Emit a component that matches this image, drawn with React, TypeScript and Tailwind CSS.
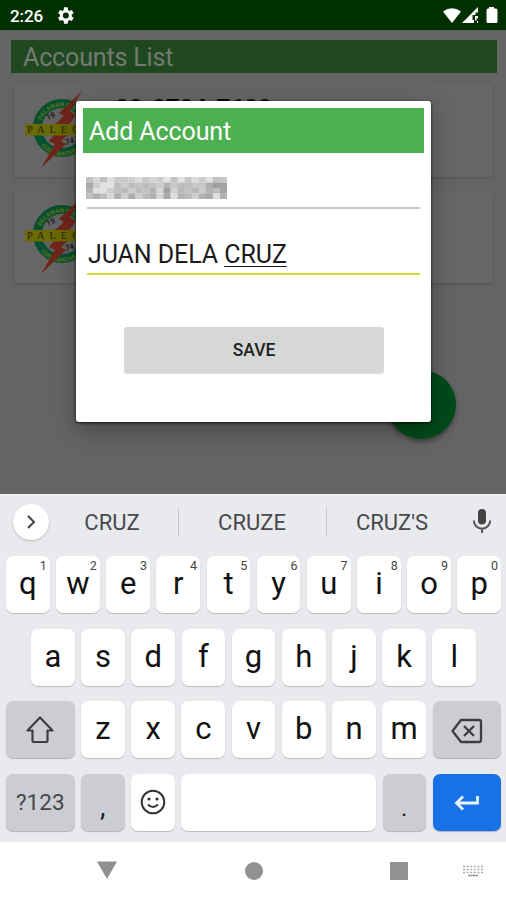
import React from "react";

const MOSAIC: number[][] = [
  [195, 215, 190, 222, 200, 200, 205, 222, 200, 212, 205, 228, 195, 225, 200, 222, 205, 225, 195, 200],
  [170, 205, 225, 225, 190, 205, 190, 195, 188, 195, 205, 180, 200, 190, 190, 200, 200, 175, 160, 165],
  [180, 225, 225, 205, 190, 185, 205, 188, 195, 180, 215, 160, 210, 185, 195, 185, 205, 180, 190, 165],
  [190, 175, 190, 215, 178, 205, 172, 205, 185, 175, 215, 168, 222, 178, 185, 208, 178, 170, 222, 178],
];

function NumberMosaic() {
  return (
    <svg className="block h-[22px] w-[141px]" viewBox="0 0 140 22" preserveAspectRatio="none">
      {MOSAIC.map((row, y) =>
        row.map((v, x) => (
          <rect key={`${x}-${y}`} x={x * 7} y={y * 5.5} width={7.2} height={5.7} fill={`rgb(${v},${v},${v})`} />
        ))
      )}
    </svg>
  );
}

function Seal({ id }: { id: string }) {
  return (
    <svg className="block h-[84px] w-[78px] shrink-0" viewBox="0 0 78 84">
      <defs>
        <path id={`${id}t`} d="M17.500 43 a22.500 22.500 0 0 1 45 0" />
        <path id={`${id}b`} d="M13 43 a27 27 0 0 0 54 0" />
      </defs>
      <circle cx="40" cy="42" r="24.500" fill="#646464" stroke="#08502f" strokeWidth="9" />
      <text fontSize="6" fontWeight="700" fill="#5b701f" fontFamily="Roboto, sans-serif">
        <textPath href={`#${id}t`} startOffset="9">PALAWAN ELECTRIC</textPath>
      </text>
      <text fontSize="6" fontWeight="700" fill="#5b701f" fontFamily="Roboto, sans-serif">
        <textPath href={`#${id}b`} startOffset="18">COOPERATIVE</textPath>
      </text>
      <text x="24" y="33" fontSize="8" fontWeight="700" fill="#202020" fontFamily="Roboto, sans-serif" transform="rotate(-20 28 30)">19</text>
      <text x="43" y="58" fontSize="8" fontWeight="700" fill="#202020" fontFamily="Roboto, sans-serif" transform="rotate(-15 47 55)">74</text>
      <path d="M60 5 L37 27 L42 30 L32 39 L37 43 L27 55 L33 58 L19 82 L44 58 L39 55 L53 43 L46 40 L54 29 L48 25 Z" fill="#70251b" />
      <rect x="3" y="38" width="72" height="11.500" fill="#6c6a05" />
      <text x="5" y="47.300" fontSize="10.500" fill="#24240c" letterSpacing="5" fontFamily="Liberation Serif, serif">PALECO</text>
    </svg>
  );
}

function AccountCard({ id, number }: { id: string; number?: string }) {
  return (
    <div className="flex h-[94px] items-start rounded-[3px] bg-[#666666] pl-2 pt-[3px] shadow-[0_1px_3px_rgba(0,0,0,0.18)]">
      <Seal id={id} />
      <div className="pl-[15px] pt-[8px] text-[24px] leading-7 font-bold text-[#080808]">{number}</div>
    </div>
  );
}

function StatusBar() {
  return (
    <header className="flex h-[30px] items-center bg-[#003000] pl-2.5 pr-2 text-white">
      <span className="text-[17px] font-medium leading-none tracking-[-0.1px] pt-0.5">2:26</span>
      <svg className="ml-[13px] h-[19px] w-[19px]" viewBox="2 2 21 20" fill="currentColor">
        <path d="M19.400 13a7.700 7.700 0 0 0 0-2l2.100-1.600-2-3.500-2.500 1a7.600 7.600 0 0 0-1.700-1L14.900 3H10.900l-.4 2.900a7.600 7.600 0 0 0-1.700 1l-2.500-1-2 3.500L6.400 11a7.700 7.700 0 0 0 0 2l-2.100 1.600 2 3.500 2.500-1a7.600 7.600 0 0 0 1.700 1l.4 2.900h4l.4-2.900a7.600 7.600 0 0 0 1.700-1l2.500 1 2-3.500ZM12.900 15.300a3.300 3.300 0 1 1 0-6.600 3.300 3.300 0 0 1 0 6.600Z" />
      </svg>
      <svg className="ml-auto h-[17px] w-[55px]" viewBox="0 0 55 17" fill="currentColor">
        <path d="M0 4.500 Q9 -2 18 4.500 L9 16 Z" />
        <path d="M19 16 L35 0 V5.500 H32.500 V8 H29.500 V13 H31 V16 Z M32 9h3v2.500h-1.500v2h-1.500zM34 14h1v2h-1z" />
        <path d="M46 0h5v1.500h2q1.500 0 1.500 1.500v11.500q0 1.500-1.500 1.500h-8q-1.500 0-1.500-1.500V3q0-1.500 1.500-1.500h1z" />
      </svg>
    </header>
  );
}

function Key({ label, hint }: { label: string; hint?: string }) {
  return (
    <div className="relative flex h-[57px] flex-1 items-center justify-center rounded-[7px] bg-white text-[31px] leading-none text-[#111] shadow-[0_1px_1px_#b9bbc0]">
      <span className="pb-0.5">{label}</span>
      {hint && <span className="absolute right-[3px] top-1 text-[12.500px] leading-3 text-[#444]">{hint}</span>}
    </div>
  );
}

function Keyboard() {
  return (
    <section className="flex h-[348px] flex-col border-t border-[#f4f4f6] bg-[#e8eaed]">
      <div className="flex h-[61px] items-center pb-[7px]">
        <div className="ml-[13px] flex h-9 w-9 items-center justify-center rounded-full bg-white shadow-[0_1px_2px_#b4b6ba]">
          <svg className="h-5 w-5" viewBox="0 0 20 20" fill="none" stroke="#444" strokeWidth="2"><path d="M7 4l6 6-6 6" /></svg>
        </div>
        <div className="flex h-[29px] flex-1 items-center text-[22px] text-[#48494c]">
          <span className="w-[129px] pr-[3px] text-center">CRUZ</span>
          <span className="h-full w-px bg-[#c4c6ca]" />
          <span className="w-[147px] pr-px text-center">CRUZE</span>
          <span className="h-full w-px bg-[#c4c6ca]" />
          <span className="w-[130px] text-center">CRUZ'S</span>
        </div>
        <svg className="-mt-[3px] mr-3 h-[26px] w-6 shrink-0" viewBox="0 0 24 26">
          <rect x="8" y="1" width="8" height="15.500" rx="4" fill="#444" />
          <path d="M3.800 12.500a8.200 8.200 0 0 0 16.400 0M12 20v5" fill="none" stroke="#55575a" strokeWidth="2" />
        </svg>
      </div>
      <div className="flex flex-col gap-[15.500px] pl-[6px] pr-[5px]">
        <div className="flex gap-[6.500px]">
          {"qwertyuiop".split("").map((c, i) => <Key key={c} label={c} hint={String((i + 1) % 10)} />)}
        </div>
        <div className="flex gap-[6.500px] px-[25px]">
          {"asdfghjkl".split("").map((c) => <Key key={c} label={c} />)}
        </div>
        <div className="flex gap-[6.500px]">
          <div className="flex h-[57px] w-[68.500px] items-center justify-center rounded-[7px] bg-[#cccdd2] shadow-[0_1px_1px_#b0b2b7]">
            <svg className="h-[29px] w-[30px]" viewBox="0 0 30 29" fill="none" stroke="#3c3e42" strokeWidth="2.200" strokeLinejoin="round"><path d="M15 2.500 L27.500 15.500 H22.500 V26 Q22.500 27 21.500 27 H8.500 Q7.500 27 7.500 26 V15.500 H2.500 Z" /></svg>
          </div>
          {"zxcvbnm".split("").map((c) => <Key key={c} label={c} />)}
          <div className="flex h-[57px] w-[68.500px] items-center justify-center rounded-[7px] bg-[#cccdd2] shadow-[0_1px_1px_#b0b2b7]">
            <svg className="mt-0.5 h-[26px] w-8" viewBox="0 0 32 26" fill="none" stroke="#3c3e42" strokeWidth="2.300"><path d="M10 2 H28 Q30 2 30 4 V22 Q30 24 28 24 H10 L1.500 13 Z" strokeLinejoin="round" /><path d="M13 8l10 10M23 8l-10 10" /></svg>
          </div>
        </div>
        <div className="flex gap-[6.500px]">
          <div className="flex h-[57px] w-[68.500px] items-center justify-center rounded-[7px] bg-[#cccdd2] pt-0.5 text-[22.500px] text-[#45474b] shadow-[0_1px_1px_#b0b2b7]">?123</div>
          <div className="flex h-[57px] w-[43.500px] items-end justify-center rounded-[7px] bg-[#cccdd2] pb-[10px] text-[28px] leading-7 text-[#222] shadow-[0_1px_1px_#b0b2b7]">,</div>
          <div className="flex h-[57px] w-[43.500px] items-center justify-center rounded-[7px] bg-white shadow-[0_1px_1px_#b9bbc0]">
            <svg className="h-[26px] w-[26px]" viewBox="0 0 26 26" fill="none" stroke="#333" strokeWidth="2"><circle cx="13" cy="13" r="11.300" /><path d="M8 15.500q5 5 10 0" /><circle cx="9" cy="10" r="1.600" fill="#333" stroke="none" /><circle cx="17" cy="10" r="1.600" fill="#333" stroke="none" /></svg>
          </div>
          <div className="h-[57px] flex-1 rounded-[7px] bg-white shadow-[0_1px_1px_#b9bbc0]" />
          <div className="flex h-[57px] w-[43.500px] items-end justify-center rounded-[7px] bg-[#cccdd2] pb-[9px] text-[24px] leading-7 text-[#222] shadow-[0_1px_1px_#b0b2b7]">.</div>
          <div className="flex h-[57px] w-[68.500px] items-center justify-center rounded-[7px] bg-[#1772e8] shadow-[0_1px_1px_#b0b2b7]">
            <svg className="mt-0.5 h-5 w-[26px]" viewBox="0 0 26 20" fill="none" stroke="#e8f3ff" strokeWidth="2.800"><path d="M23.500 3V10H3M9 3.500L2.500 10L9 16.500" /></svg>
          </div>
        </div>
      </div>
    </section>
  );
}

function NavBar() {
  return (
    <nav className="flex h-[58px] items-center bg-white pl-[97px] pr-[23px] text-[#919191]">
      <svg className="-mt-0.5 h-[18px] w-5" viewBox="0 0 20 18" fill="currentColor"><path d="M0 0.500h20L10 18Z" /></svg>
      <div className="ml-[128px] h-[18px] w-[18px] rounded-full bg-[#919191]" />
      <div className="ml-[127px] h-[18px] w-[18px] bg-[#919191]" />
      <svg className="ml-auto h-3 w-5" viewBox="0 0 20 12">
        <path d="M0 1.500h20M0 4.500h20M0 7.500h20" stroke="#aaa" strokeWidth="1.700" strokeDasharray="2 1.600" />
        <path d="M5 10.500h10" stroke="#999" strokeWidth="1.500" />
      </svg>
    </nav>
  );
}

export default function App() {
  return (
    <div className="flex h-[900px] w-[506px] flex-col overflow-hidden font-[Roboto,sans-serif]">
      <StatusBar />
      <main className="relative h-[464px] overflow-hidden bg-[#646464] pl-[11px] pr-[9px] pt-[10px]">
        <h1 className="flex h-[33px] items-center bg-[#204820] pl-3 pt-0.5 text-[25px] font-normal tracking-[-0.15px] text-[#737a70]">Accounts List</h1>
        <div className="mt-[10px] flex flex-col gap-3 pl-[3px] pr-1">
          <AccountCard id="first" number="00-0704-7600" />
          <AccountCard id="second" />
        </div>
        <div className="absolute left-[387px] top-[340px] h-[69px] w-[69px] rounded-full bg-[#004a1a] shadow-[0_3px_5px_rgba(0,0,0,0.35)]" />
        <div className="absolute left-[76px] top-[71px] flex h-[321px] w-[355px] flex-col rounded-[3px] bg-white px-[7px] pt-[7px] shadow-[0_1px_3px_rgba(0,0,0,0.8),0_8px_24px_rgba(0,0,0,0.3)]">
          <h2 className="flex h-[45px] items-center bg-[#4caf50] pl-1.5 pt-0.5 text-[25px] font-normal tracking-[-0.1px] text-white">Add Account</h2>
          <div className="mx-1 mt-6 h-[32px] border-b-2 border-[#c9c9c9]">
            <div className="-ml-[1px]"><NumberMosaic /></div>
          </div>
          <div className="mx-1 flex h-[66px] items-end border-b-2 border-[#cddc39] pb-1 text-[25px] leading-[29px] tracking-[-0.07px] text-[#1b1b1b]">
            <span className="whitespace-pre pl-px">JUAN DELA <span className="underline decoration-1 underline-offset-[3px]">CRUZ</span></span>
          </div>
          <button className="ml-[41px] mt-[52px] h-[46px] w-[260px] rounded-[3px] bg-[#d6d8d7] pt-px text-[17.500px] font-medium text-[#222] shadow-[0_1px_1px_#ddd]">SAVE</button>
        </div>
      </main>
      <Keyboard />
      <NavBar />
    </div>
  );
}
